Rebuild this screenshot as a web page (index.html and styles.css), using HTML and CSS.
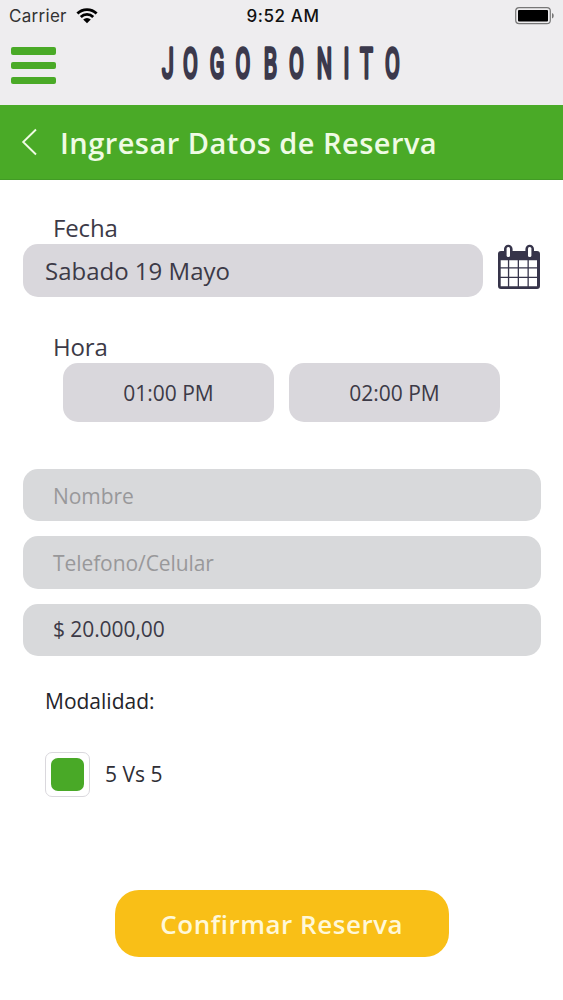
FILE: index.html
```html
<!DOCTYPE html>
<html lang="es">
<head>
<meta charset="utf-8">
<title>Jogobonito</title>
<link rel="stylesheet" href="styles.css">
</head>
<body>
<header class="top">
  <div class="status">
    <div class="carrier"><span>Carrier</span>
      <svg width="22" height="16" viewBox="0 0 22 16"><path d="M1.4 5.6a13.6 13.6 0 0 1 19.2 0M4.8 9a8.8 8.8 0 0 1 12.4 0" fill="none" stroke="#000" stroke-width="2.8"/><path d="M11 15.2 7.2 11.5a5.4 5.4 0 0 1 7.600 0z"/></svg>
    </div>
    <div class="clock">9:52 AM</div>
    <svg class="battery" width="40" height="18" viewBox="0 0 40 18"><rect x=".7" y=".7" width="34.6" height="16" rx="3.4" fill="none" stroke="#777" stroke-width="1.2"/><rect x="3" y="3" width="30" height="11.4" rx="1"/><path d="M37 6c2.3.6 2.3 4.8 0 5.4z" fill="#777"/></svg>
  </div>
  <div class="brandbar">
    <div class="burger"><i></i><i></i><i></i></div>
    <svg class="logo" width="260" height="66" viewBox="-5 0 260 66"><text class="logo-text" transform="scale(.5 1)" y="46.500" x="24 69 122 174 229 281 337 381 421 473">JOGOBONITO</text></svg>
  </div>
</header>
<div class="titlebar">
  <svg width="16" height="28" viewBox="0 0 16 28"><path d="M15 1.5 2.200 14 15 26.500" fill="none" stroke="#effbe4" stroke-width="1.900"/></svg>
  <h1>Ingresar Datos de Reserva</h1>
</div>
<main class="form">
  <label class="label">Fecha</label>
  <div class="daterow">
    <div class="field date"><span>Sabado 19 Mayo</span></div>
    <svg width="44" height="46" viewBox="0 0 44 46"><path fill="#36344a" fill-rule="evenodd" d="M4 7h3V5a4.300 4.300 0 0 1 8.600 0v2h12.800V5a4.300 4.300 0 0 1 8.600 0v2h3a3 3 0 0 1 3 3v32a3 3 0 0 1-3 3H4a3 3 0 0 1-3-3V10a3 3 0 0 1 3-3zM3.700 16.300v7h7.200v-7zm8.500 0v7h8.500v-7zm9.800 0v7h8.500v-7zm9.800 0v7h8.200v-7zM3.700 24.600v8.200h7.200v-8.200zm8.500 0v8.200h8.500v-8.200zm9.800 0v8.200h8.500v-8.200zm9.800 0v8.200h8.200v-8.200zM3.700 34.100v8.200h7.200v-8.200zm8.500 0v8.200h8.500v-8.200zm9.800 0v8.200h8.500v-8.200zm9.800 0v8.200h8.200v-8.200z"/><g fill="#fff"><rect x="9.600" y="3" width="3.400" height="10" rx="1.500"/><rect x="31" y="3" width="3.400" height="10" rx="1.500"/></g></svg>
  </div>
  <label class="label hour">Hora</label>
  <div class="times">
    <div class="field time"><span>01:00 PM</span></div>
    <div class="field time"><span>02:00 PM</span></div>
  </div>
  <div class="inputs">
    <div class="field input hint"><span>Nombre</span></div>
    <div class="field input hint"><span>Telefono/Celular</span></div>
    <div class="field input price"><span>$ 20.000,00</span></div>
  </div>
  <div class="mode">Modalidad:</div>
  <div class="option"><div class="check"><i></i></div><span>5 Vs 5</span></div>
  <button class="confirm"><span>Confirmar Reserva</span></button>
</main>
</body>
</html>
```
FILE: styles.css
```css
* { box-sizing: border-box; }
body { margin: 0; width: 563px; height: 1000px; overflow: hidden; background: #fff; font-family: "Open Sans", "Noto Sans", sans-serif; color: #3c3a47; }
svg { display: block; flex: none; }
.top { height: 105px; background: #eeedef; }
.status { height: 32px; display: grid; grid-template-columns: 1fr auto 1fr; align-items: center; padding: 0 8px 0 9px; font-family: Inter, sans-serif; color: #111; }
.carrier { display: flex; align-items: center; gap: 9px; font-size: 17px; letter-spacing: .3px; color: #333; }
.clock { font-size: 17px; font-weight: 500; letter-spacing: .6px; padding-left: 2px; }
.battery { justify-self: end; }
.brandbar { display: flex; align-items: flex-start; padding-left: 11px; }
.burger { width: 45px; padding-top: 15px; display: flex; flex-direction: column; gap: 7.400px; }
.burger i { height: 7.500px; border-radius: 2px; background: #4aaa27; }
.logo { margin-left: 95px; }
.logo-text { font: 400 43px Roboto, sans-serif; text-anchor: middle; fill: #3b394c; stroke: #3b394c; stroke-width: 2.800px; stroke-linejoin: round; vector-effect: non-scaling-stroke; }
.titlebar { height: 75px; background: #4aaa27; border-bottom: 1px solid #429b25; display: flex; align-items: center; padding-left: 21px; gap: 23px; }
h1 { margin: 0; font-size: 29px; font-weight: 600; letter-spacing: .46px; color: #effbe4; white-space: nowrap; }
.form { padding: 32px 22.500px 0 23px; display: flex; flex-direction: column; }
.label { font-size: 24px; line-height: 32px; padding-left: 30px; letter-spacing: -.15px; }
.daterow { display: flex; gap: 14px; }
.field { display: flex; align-items: center; background: #d9d7dc; border-radius: 15px; white-space: nowrap; }
.date { flex: none; width: 460px; height: 53px; padding: 0 0 0 22px; font-size: 24px; }
.hour { margin-top: 34px; }
.times { display: flex; gap: 15px; padding-left: 40px; }
.time { width: 211px; height: 59px; justify-content: center; font-size: 21px; }
.inputs { margin-top: 47px; display: flex; flex-direction: column; gap: 15px; }
.input { height: 52.300px; padding-left: 30px; background: #d8d9db; font-size: 21px; letter-spacing: -.08px; }
.hint { color: #98989a; }
.hint span { padding-top: 1px; }
.price { padding-bottom: 2px; }
.mode { margin-top: 30px; font-size: 21px; line-height: 30px; padding-left: 22px; color: #24242a; }
.option { display: flex; align-items: center; gap: 15px; margin-top: 36px; padding-left: 22px; font-size: 21px; color: #2f2e35; }
.check { width: 45px; height: 45px; border: 1.500px solid #dad8dd; border-radius: 7px; display: grid; place-items: center; }
.check i { width: 33px; height: 33px; border-radius: 7px; background: #49a927; }
.confirm { align-self: center; width: 334px; height: 67px; margin-top: 93px; padding: 2px 0 0; border: 0; border-radius: 24px; background: #f9bf17; color: #fff8d8; font: 600 26px "Open Sans", sans-serif; letter-spacing: .52px; white-space: nowrap; }
```
